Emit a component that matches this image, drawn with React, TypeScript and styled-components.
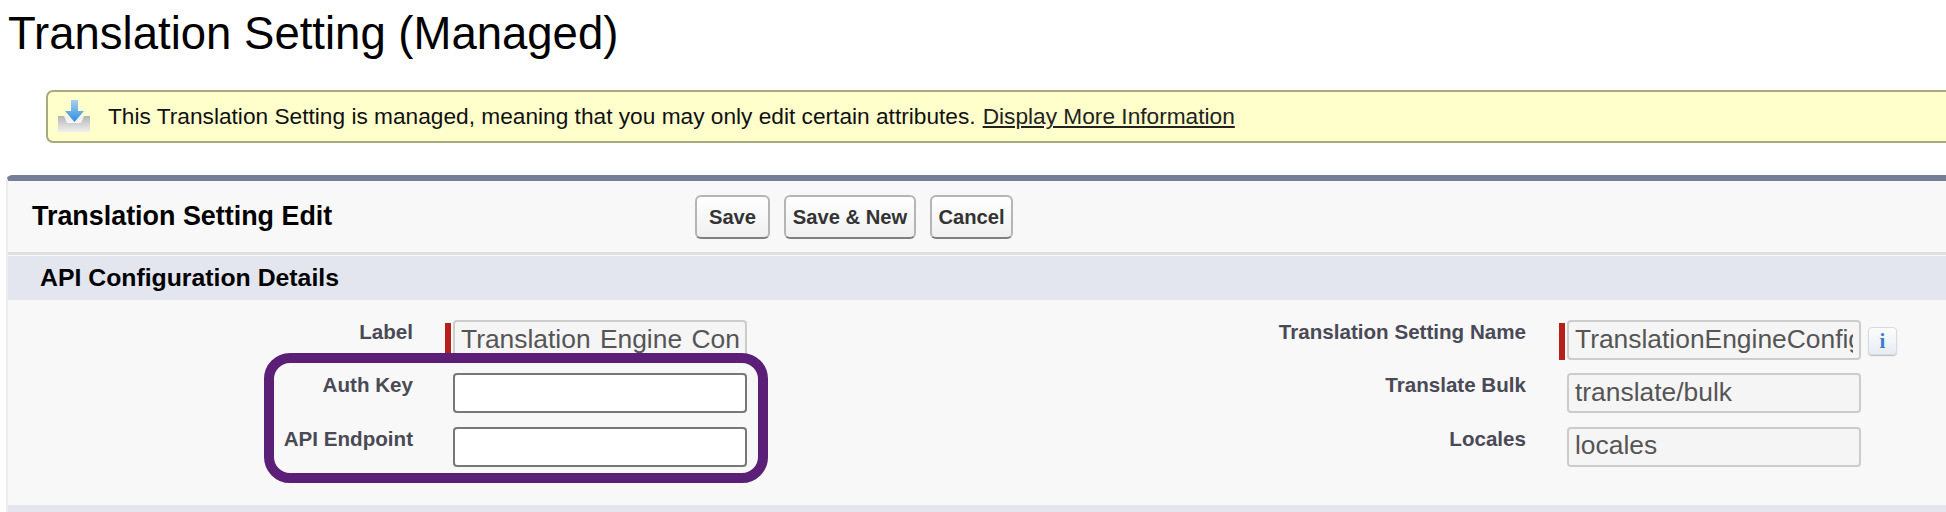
import React from "react";
import styled, { createGlobalStyle } from "styled-components";

const Global = createGlobalStyle`
  html, body { margin: 0; padding: 0; background: #fff; overflow: hidden; }
  body { font-family: "Liberation Sans", Arial, sans-serif; width: 1946px; height: 512px; }
`;

const Page = styled.div`
  width: 1946px;
  height: 512px;
  overflow: hidden;
`;

const Title = styled.h1`
  margin: 0;
  padding: 8px 0 0 8px;
  height: 83px;
  box-sizing: border-box;
  font-size: 45.5px;
  line-height: 52px;
  font-weight: 400;
  color: #000;
`;

const Alert = styled.div`
  box-sizing: border-box;
  margin: 7px 0 0 46px;
  width: 2000px;
  height: 53px;
  display: flex;
  align-items: center;
  padding-left: 10px;
  background: #ffffcc;
  border: 2px solid #a9a97f;
  border-radius: 7px;
  font-size: 22.7px;
  color: #111;
`;

const AlertIcon = styled.svg`
  width: 34px;
  height: 36px;
  margin-right: 16px;
  flex: none;
`;

const AlertLink = styled.a`
  margin-left: 7px;
  color: #222;
  text-decoration: underline;
`;

const Panel = styled.section`
  box-sizing: border-box;
  margin: 32px 0 0 6px;
  width: 2000px;
  height: 337px;
  background: #f8f8f8;
  border-top: 6px solid #747e96;
  border-left: 2px solid #ececec;
  border-top-left-radius: 6px;
`;

const PanelHeader = styled.div`
  box-sizing: border-box;
  height: 74px;
  border-bottom: 3px solid #e0e0e0;
  display: flex;
  align-items: center;
  padding-left: 24px;
`;

const PanelTitle = styled.h2`
  margin: 0;
  width: 663px;
  font-size: 26.9px;
  font-weight: 700;
  color: #000;
`;

const Buttons = styled.div`
  display: flex;
  gap: 14px;
  margin-top: 1px;
`;

const Button = styled.button<{ $w: number }>`
  box-sizing: border-box;
  width: ${(p) => p.$w}px;
  height: 44px;
  padding: 0;
  font-family: inherit;
  font-size: 20.2px;
  font-weight: 700;
  color: #333;
  border: 2px solid #b5b5b5;
  border-bottom-color: #7f7f7f;
  border-radius: 6px;
  background: linear-gradient(#ffffff, #f0f0f0);
`;

const SectionBar = styled.div`
  margin-top: 1px;
  height: 44px;
  background: #e3e6ef;
  display: flex;
  align-items: center;
  padding-left: 32px;
`;

const SectionTitle = styled.h3`
  margin: 0 0 1px;
  font-size: 24.8px;
  font-weight: 700;
  color: #000;
`;

const FormBody = styled.div`
  position: relative;
  box-sizing: border-box;
  height: 203px;
  padding: 20px 0 0 0;
  display: grid;
  grid-template-columns: 405px 40px 294px 779px 41px 294px 38px;
  grid-auto-rows: 40px;
  row-gap: 13.25px;
`;

const FieldLabel = styled.label`
  text-align: right;
  font-size: 20.6px;
  line-height: 24px;
  font-weight: 700;
  color: #4a4a56;
`;

const Required = styled.span<{ $on?: boolean }>`
  justify-self: end;
  align-self: center;
  margin-right: 2px;
  margin-top: 2px;
  width: 6px;
  height: 37px;
  background: ${(p) => (p.$on ? "#b5201a" : "transparent")};
`;

const Input = styled.input<{ $editable?: boolean }>`
  box-sizing: border-box;
  width: 294px;
  height: 40px;
  padding: 0 6px 2px;
  font-family: inherit;
  font-size: 26.4px;
  word-spacing: 2px;
  color: #555;
  border-radius: 4px;
  outline: none;
  border: 2px solid ${(p) => (p.$editable ? "#777" : "#ccc")};
  background: ${(p) => (p.$editable ? "#fff" : "#f5f5f5")};
`;

const InfoCell = styled.div`
  padding: 7px 0 0 7px;
`;

const InfoButton = styled.button`
  box-sizing: border-box;
  display: block;
  width: 29px;
  height: 28px;
  padding: 0;
  border: 1px solid #d8dbe0;
  border-radius: 4px;
  box-shadow: 0 1px 1px #b8bcc2;
  background: linear-gradient(#fbfcfe, #e8edf3);
  font-family: "Liberation Serif", serif;
  font-size: 21px;
  font-weight: 700;
  line-height: 24px;
  color: #3a7bd0;
`;

const Highlight = styled.div`
  position: absolute;
  box-sizing: border-box;
  left: 256px;
  top: 53px;
  width: 504px;
  height: 130px;
  border: 10px solid #5b1f77;
  border-radius: 26px;
  pointer-events: none;
`;

const NextBar = styled.div`
  margin-top: 2px;
  height: 20px;
  background: #e3e6ef;
`;

const rows = [
  { left: "Label", leftReq: true, leftVal: "Translation Engine Configuration", leftEdit: false, right: "Translation Setting Name", rightReq: true, rightVal: "TranslationEngineConfig", info: true },
  { left: "Auth Key", leftReq: false, leftVal: "", leftEdit: true, right: "Translate Bulk", rightReq: false, rightVal: "translate/bulk", info: false },
  { left: "API Endpoint", leftReq: false, leftVal: "", leftEdit: true, right: "Locales", rightReq: false, rightVal: "locales", info: false },
];

export default function App() {
  return (
    <Page>
      <Global />
      <Title>Translation Setting (Managed)</Title>
      <Alert>
        <AlertIcon viewBox="0 0 34 36" aria-hidden="true">
          <defs>
            <linearGradient id="tray" x1="0" y1="0" x2="0" y2="1">
              <stop offset="0" stopColor="#b4b4b4" />
              <stop offset="0.55" stopColor="#d6d6d6" />
              <stop offset="1" stopColor="#f0f0f0" />
            </linearGradient>
            <linearGradient id="arrow" x1="0" y1="0" x2="0" y2="1">
              <stop offset="0" stopColor="#a5cff0" />
              <stop offset="1" stopColor="#2f8fdc" />
            </linearGradient>
          </defs>
          <path d="M0 17h32v16H0z" fill="url(#tray)" />
          <path d="M6 17h20l-3 7H9z" fill="#ffffff" opacity="0.8" />
          <path d="M13 1h7v11h6L16.500 23 7 12h6z" fill="url(#arrow)" />
        </AlertIcon>
        This Translation Setting is managed, meaning that you may only edit certain attributes.
        <AlertLink href="#">Display More Information</AlertLink>
      </Alert>
      <Panel>
        <PanelHeader>
          <PanelTitle>Translation Setting Edit</PanelTitle>
          <Buttons>
            <Button $w={75}>Save</Button>
            <Button $w={132}>Save &amp; New</Button>
            <Button $w={83}>Cancel</Button>
          </Buttons>
        </PanelHeader>
        <SectionBar>
          <SectionTitle>API Configuration Details</SectionTitle>
        </SectionBar>
        <FormBody>
          {rows.map((r) => (
            <React.Fragment key={r.left}>
              <FieldLabel>{r.left}</FieldLabel>
              <Required $on={r.leftReq} />
              <Input $editable={r.leftEdit} value={r.leftVal} readOnly />
              <FieldLabel>{r.right}</FieldLabel>
              <Required $on={r.rightReq} />
              <Input value={r.rightVal} readOnly />
              {r.info ? (
                <InfoCell>
                  <InfoButton>i</InfoButton>
                </InfoCell>
              ) : (
                <span />
              )}
            </React.Fragment>
          ))}
          <Highlight />
        </FormBody>
        <NextBar />
      </Panel>
    </Page>
  );
}
